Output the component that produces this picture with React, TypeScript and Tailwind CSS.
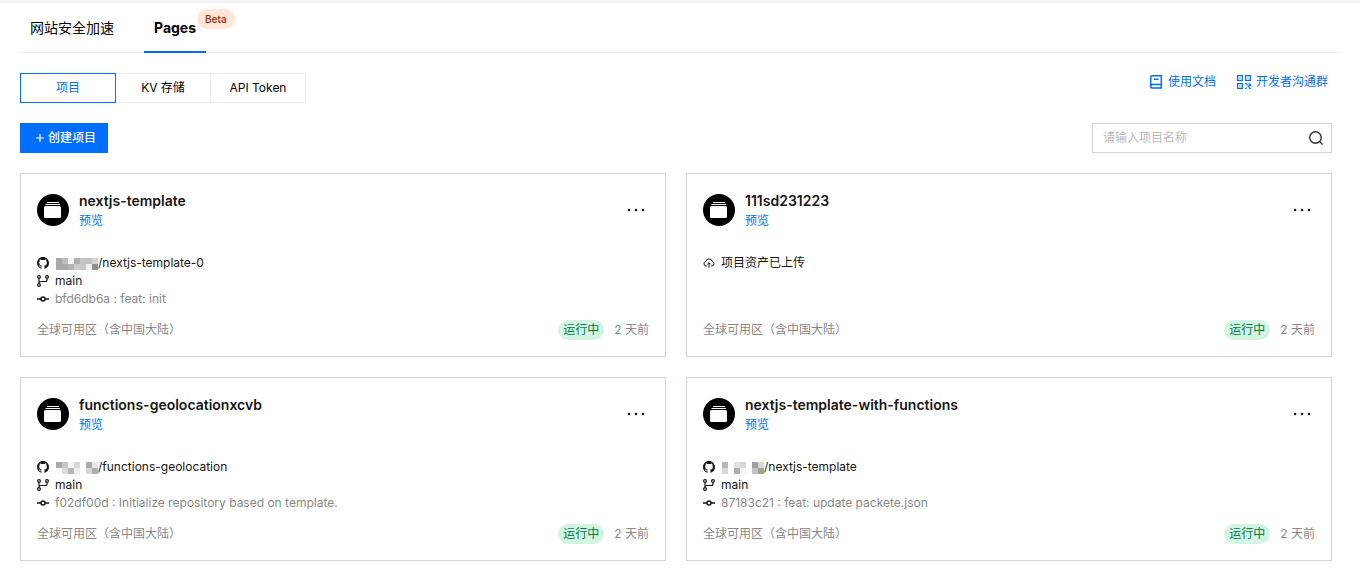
import { Fragment } from "react";

type Project = {
  name: string;
  mosaic?: string[];
  repo?: string;
  branch?: string;
  commit?: string;
};

const projects: Project[] = [
  {
    name: "nextjs-template",
    mosaic: [
      "#a9a9a9", "#bdbdbd", "#f4f4f4", "#adadad", "#c4c4c4", "#c2c2c2", "#d2d2d2",
      "#a9a9a9", "#a9a9a9", "#b3b3b3", "#cccccc", "#c8c8c8", "#f0f0f0", "#8f8f8f",
    ],
    repo: "/nextjs-template-0",
    branch: "main",
    commit: "bfd6db6a : feat: init",
  },
  { name: "111sd231223" },
  {
    name: "functions-geolocationxcvb",
    mosaic: [
      "#a9a9a9", "#c4c4c4", "#f4f4f4", "#d8d8d8", "#ffffff", "#a9a9a9", "#e6e6e6",
      "#f8f8f8", "#dcdcdc", "#b5b5b5", "#ececec", "#ffffff", "#d8d8d8", "#adadad",
    ],
    repo: "/functions-geolocation",
    branch: "main",
    commit: "f02df00d : Initialize repository based on template.",
  },
  {
    name: "nextjs-template-with-functions",
    mosaic: [
      "#b5b5b5", "#ffffff", "#e2e2e2", "#d6d6d6", "#ffffff", "#a0a0a0", "#d8d8d8",
      "#d8d8d8", "#ffffff", "#a9a9a9", "#f4f4f4", "#fafafa", "#c2c2c2", "#a0a0a0",
    ],
    repo: "/nextjs-template",
    branch: "main",
    commit: "87183c21 : feat: update packete.json",
  },
];

function GithubIcon() {
  return (
    <svg viewBox="0 0 16 16" className="size-3 shrink-0" fill="currentColor" aria-hidden="true">
      <path d="M8 0C3.58 0 0 3.58 0 8c0 3.54 2.29 6.53 5.47 7.59.4.07.55-.17.55-.38 0-.19-.01-.82-.01-1.49-2.01.37-2.53-.49-2.69-.94-.09-.23-.48-.94-.82-1.13-.28-.15-.68-.52-.01-.53.63-.01 1.08.58 1.23.82.72 1.21 1.87.87 2.33.66.07-.52.28-.87.51-1.07-1.78-.2-3.64-.89-3.64-3.95 0-.87.31-1.59.82-2.15-.08-.2-.36-1.02.08-2.12 0 0 .67-.21 2.2.82.64-.18 1.32-.27 2-.27s1.36.09 2 .27c1.53-1.04 2.2-.82 2.2-.82.44 1.1.16 1.92.08 2.12.51.56.82 1.27.82 2.15 0 3.07-1.87 3.75-3.65 3.95.29.25.54.73.54 1.48 0 1.07-.01 1.93-.01 2.2 0 .21.15.46.55.38A8.01 8.01 0 0 0 16 8c0-4.42-3.58-8-8-8z" />
    </svg>
  );
}

function BranchIcon() {
  return (
    <svg viewBox="0 0 12 12" className="size-3 shrink-0" fill="none" stroke="currentColor" strokeWidth="1.2" aria-hidden="true">
      <circle cx="2" cy="2" r="1.4" />
      <circle cx="2" cy="10" r="1.4" />
      <circle cx="10" cy="2" r="1.4" />
      <path d="M2 3.4v5.2M10 3.4v1.2Q10 6.5 8.4 6.5H4.2Q2 6.5 2 8.4" />
    </svg>
  );
}

function CommitIcon() {
  return (
    <svg viewBox="0 0 12 12" className="size-3 shrink-0" fill="none" stroke="currentColor" strokeWidth="1.5" aria-hidden="true">
      <circle cx="6" cy="6" r="2" />
      <path d="M0 6h4M8 6h4" />
    </svg>
  );
}

function CloudUploadIcon() {
  return (
    <svg viewBox="0 0 12 12" className="size-3 shrink-0" fill="none" stroke="currentColor" strokeWidth="1" aria-hidden="true">
      <path d="M4 9H3A2.3 2.3 0 0 1 2.7 4.5 3.4 3.4 0 0 1 9.3 4.5 2.3 2.3 0 0 1 9 9H8M6 10.8V5.8M4.2 7.4 6 5.6l1.8 1.8" />
    </svg>
  );
}

function ProjectIcon() {
  return (
    <svg viewBox="0 0 32 32" className="size-8 shrink-0" aria-hidden="true">
      <circle cx="16" cy="16" r="16" fill="#000" />
      <path d="M10 8h12v1H10zM8.5 10h14.5v1.1H8.5z" fill="#fff" />
      <rect x="7" y="12" width="17" height="12" rx="1.5" fill="#fff" />
    </svg>
  );
}

function BookIcon() {
  return (
    <svg viewBox="-1 -1 16 16" className="size-4" fill="none" stroke="currentColor" strokeWidth="1.5" aria-hidden="true">
      <path d="M12.3 9.6V.8H3.2Q1.7.8 1.7 2.3v9.3q0 1.5 1.5 1.5h9.1V9.6H3.2Q1.7 9.6 1.7 11.1M5 4.2h4.5" />
    </svg>
  );
}

function QrIcon() {
  return (
    <svg viewBox="-1 -1 16 16" className="size-4" fill="none" stroke="currentColor" strokeWidth="1.2" aria-hidden="true">
      <path d="M.6.6h4.8v4.8H.6zM8.6.6h4.8v4.8H8.6zM.6 8.6h4.8v4.8H.6z" />
      <path d="M2.4 3h1.2M10.4 3h1.2M2.4 11h1.2M8 8.6h2v2.2M12 8v1.4h2M8 13.4h1.5v-1M10.6 11.5h1.6v2H14M11.5 10.5H14" strokeWidth="1" />
    </svg>
  );
}

function Mosaic({ cells }: { cells: string[] }) {
  return (
    <svg viewBox="0 0 42 12" width="42" height="12" className="mt-px ml-px shrink-0" shapeRendering="crispEdges" aria-hidden="true">
      {cells.map((fill, i) => (
        <rect key={i} x={(i % 7) * 6} y={i < 7 ? 0 : 6} width="6" height="6" fill={fill} />
      ))}
    </svg>
  );
}

function ProjectCard({ project }: { project: Project }) {
  return (
    <article className="flex flex-col border border-[#cfd5de] p-4">
      <header className="flex items-center gap-2.5">
        <ProjectIcon />
        <div className="min-w-0 flex-1">
          <h2 className="truncate text-sm leading-[22px] font-semibold">{project.name}</h2>
          <a href="#preview" className="block w-fit leading-[18px] text-[#006eff]">预览</a>
        </div>
        <button type="button" aria-label="更多操作" className="px-1 py-2">
          <svg viewBox="0 0 18 4" width="18" height="4" fill="currentColor" aria-hidden="true">
            <circle cx="2" cy="2" r="1.3" />
            <circle cx="9" cy="2" r="1.3" />
            <circle cx="16" cy="2" r="1.3" />
          </svg>
        </button>
      </header>

      <div className="mt-6 h-[54px] leading-[18px]">
        {project.repo ? (
          <Fragment>
            <div className="flex items-center gap-1.5">
              <GithubIcon />
              <div className="flex items-center">
                {project.mosaic && <Mosaic cells={project.mosaic} />}
                <span>{project.repo}</span>
              </div>
            </div>
            <div className="flex items-center gap-1.5">
              <BranchIcon />
              <span>{project.branch}</span>
            </div>
            <div className="flex items-center gap-1.5">
              <CommitIcon />
              <span className="text-[#888888]">{project.commit}</span>
            </div>
          </Fragment>
        ) : (
          <div className="flex items-center gap-1.5">
            <CloudUploadIcon />
            <span>项目资产已上传</span>
          </div>
        )}
      </div>

      <footer className="mt-3 flex h-5 items-center text-[#888888]">
        <span className="flex-1">全球可用区（含中国大陆）</span>
        <span className="rounded-full bg-[#d3f4e2] px-[5px] leading-5 text-[#007a48]">运行中</span>
        <span className="ml-2.5">2 天前</span>
      </footer>
    </article>
  );
}

export default function App() {
  return (
    <div className="border-t-3 border-[#f2f3f7] bg-white pb-2 pl-5 font-[Inter,'Noto_Sans_CJK_SC',sans-serif] text-xs text-[#161616]">
      <nav className="mr-5 flex h-[50px] gap-5 border-b border-[#e7eaef] text-sm text-black">
        <a href="#acceleration" className="flex h-[50px] items-center px-2.5">网站安全加速</a>
        <a href="#pages" className="relative flex h-[50px] items-center border-b-2 border-[#006eff] px-2.5 pt-0.5 font-bold">
          Pages
          <span className="absolute top-1.5 left-[53px] rounded-full bg-[#ffe6d6] px-2 text-[10px] leading-5 font-medium text-[#a62a00]">
            Beta
          </span>
        </a>
      </nav>

      <main className="mr-7 pt-5">
        <div className="flex items-start justify-between">
          <div className="flex text-black">
            <button type="button" className="z-10 h-[30px] w-24 border border-[#006eff] text-[#006eff]">项目</button>
            <button type="button" className="-ml-px h-[30px] w-24 border border-[#e7eaef]">KV 存储</button>
            <button type="button" className="-ml-px h-[30px] w-24 border border-[#e7eaef]">API Token</button>
          </div>
          <div className="flex gap-5 pr-1 leading-[18px] text-[#006eff]">
            <a href="#docs" className="flex items-center gap-1">
              <BookIcon />
              使用文档
            </a>
            <a href="#community" className="flex items-center gap-1">
              <QrIcon />
              开发者沟通群
            </a>
          </div>
        </div>

        <div className="mt-5 flex items-center justify-between">
          <button type="button" className="flex h-[30px] items-center gap-1 bg-[#006eff] pr-3 pl-4 font-medium text-white">
            <svg viewBox="0 0 8 8" className="size-2" stroke="currentColor" strokeWidth="1.2" aria-hidden="true">
              <path d="M4 0v8M0 4h8" />
            </svg>
            创建项目
          </button>
          <div className="flex h-[30px] w-60 items-center border border-[#cfd5de] pr-2 pl-2.5">
            <input
              type="text"
              aria-label="项目名称"
              placeholder="请输入项目名称"
              className="min-w-0 flex-1 outline-none placeholder:text-[#bbbbbb]"
            />
            <button type="button" aria-label="搜索">
              <svg viewBox="0 0 14 14" className="size-3.5" fill="none" stroke="#333" strokeWidth="1.4" aria-hidden="true">
                <circle cx="6.5" cy="6.5" r="5.8" />
                <path d="m10.6 10.6 3 3" />
              </svg>
            </button>
          </div>
        </div>

        <div className="mt-5 grid grid-cols-2 gap-5">
          {projects.map((project) => (
            <ProjectCard key={project.name} project={project} />
          ))}
        </div>
      </main>
    </div>
  );
}
